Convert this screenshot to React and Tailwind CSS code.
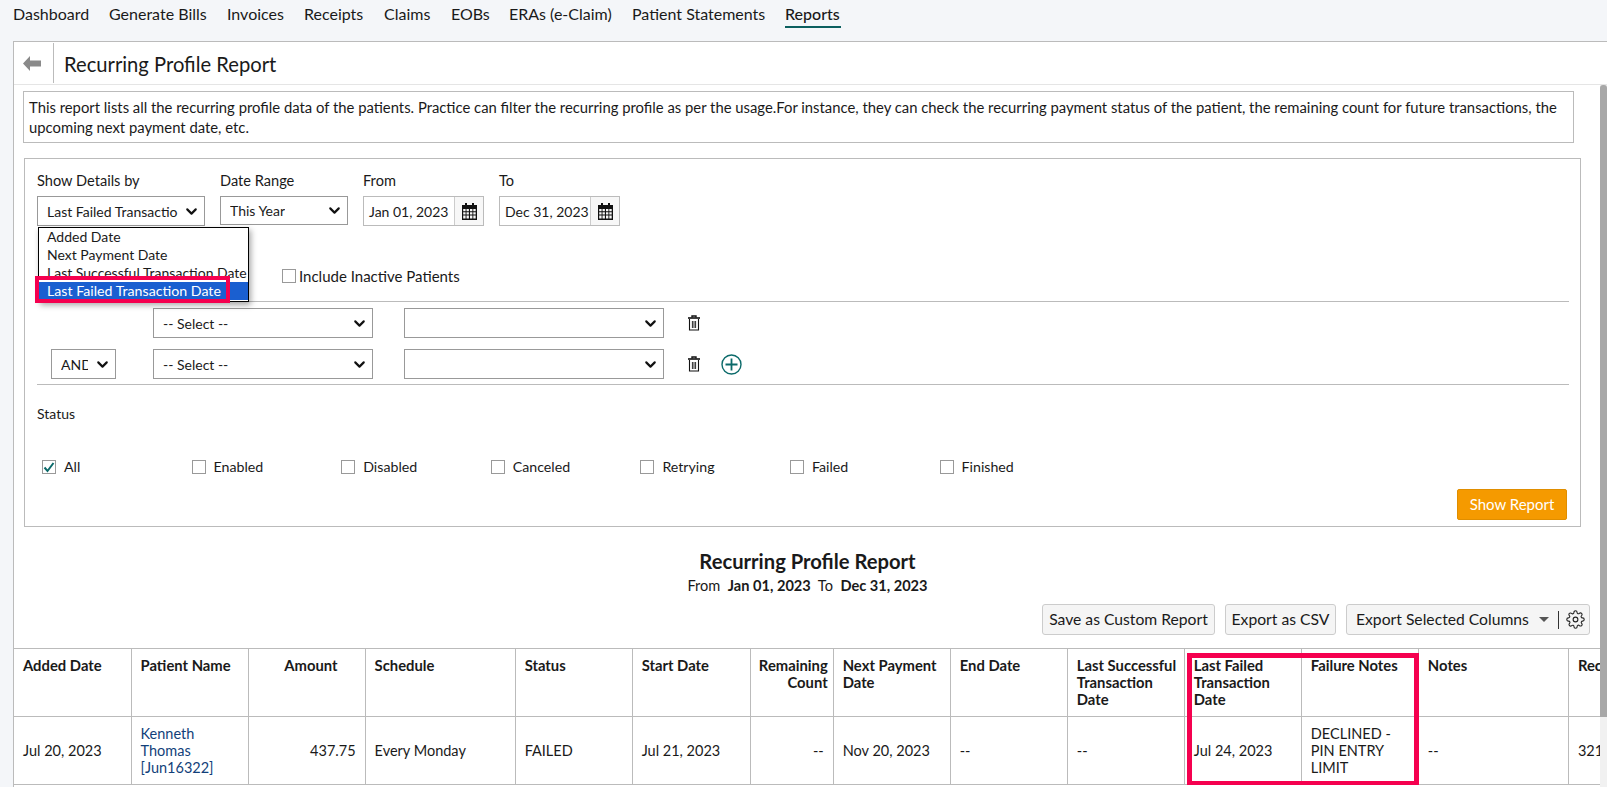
import React from 'react';
import { ChevronDown } from 'lucide-react';

const Trash = () => (
  <svg width="14" height="16" viewBox="0 0 14 16" fill="none" stroke="#111" className="shrink-0">
    <path d="M1 3h12" strokeWidth="1.6" />
    <path d="M5 2.4V1h4v1.4" strokeWidth="1.4" />
    <path d="M2.5 4v11h9V4" strokeWidth="1.1" />
    <path d="M5.4 6v7M7 6v7M8.6 6v7" strokeWidth="0.9" />
  </svg>
);

const Calendar = () => (
  <svg width="15" height="17" viewBox="0 0 15 17" fill="#111">
    <path d="M3 0h2v3H3zM10 0h2v3h-2z" />
    <path fillRule="evenodd" d="M0 2h15v15H0zM1.2 6v2.2h2.4V6zM4.5 6v2.2h2.4V6zM8 6v2.2h2.4V6zM11.3 6v2.2h2.4V6zM1.2 9.2v2.2h2.4V9.2zM4.5 9.2v2.2h2.4V9.2zM8 9.2v2.2h2.4V9.2zM11.3 9.2v2.2h2.4V9.2zM1.2 12.5v2.9h2.4v-2.9zM4.5 12.5v2.9h2.4v-2.9zM8 12.5v2.9h2.4v-2.9zM11.3 12.5v2.9h2.4v-2.9z" />
  </svg>
);

const Gear = () => (
  <svg width="19" height="19" viewBox="0 0 24 24" fill="none" stroke="#222" strokeWidth="1.4" strokeLinejoin="round">
    <circle cx="12" cy="12" r="3" />
    <path d="M19.4 15a1.65 1.65 0 0 0 .33 1.82l.06.06a2 2 0 1 1-2.83 2.83l-.06-.06a1.65 1.65 0 0 0-2.82 1.17V21a2 2 0 1 1-4 0v-.09A1.65 1.65 0 0 0 7.3 19.7l-.06.06a2 2 0 1 1-2.83-2.83l.06-.06A1.65 1.65 0 0 0 3.3 14H3a2 2 0 1 1 0-4h.09A1.65 1.65 0 0 0 4.3 7.2l-.06-.06a2 2 0 1 1 2.83-2.83l.06.06A1.65 1.65 0 0 0 10 3.2V3a2 2 0 1 1 4 0v.09a1.65 1.65 0 0 0 2.82 1.17l.06-.06a2 2 0 1 1 2.83 2.83l-.06.06A1.65 1.65 0 0 0 20.8 10H21a2 2 0 1 1 0 4h-.09a1.65 1.65 0 0 0-1.51 1z" />
  </svg>
);

const SelectBox = ({ className, value, spanClass = '' }) => (
  <div className={`flex items-center justify-between border border-[#999] bg-white pl-[9px] pr-[4px] text-[14px] text-[#1a1a1a] ${className}`}>
    <span className={`overflow-hidden whitespace-nowrap ${spanClass}`}>{value}</span>
    <ChevronDown size={17} strokeWidth={3} color="#111" className="shrink-0" />
  </div>
);

const DateBox = ({ value }) => (
  <div className="flex h-[30px] w-[121px] border border-[#bbb] bg-white text-[14px] text-[#1a1a1a]">
    <div className="flex flex-1 items-center pl-[5px] whitespace-nowrap">{value}</div>
    <div className="flex w-[29px] items-center justify-center border-l border-[#ccc] bg-[#f7f7f7]"><Calendar /></div>
  </div>
);

const Check = ({ label, checked }) => (
  <div className="flex w-[149.6px] items-center text-[14.2px] text-[#1a1a1a]">
    <span className="mr-[8px] flex h-[14px] w-[14px] items-center justify-center border border-[#999] bg-white">
      {checked && (
        <svg width="12" height="12" viewBox="0 0 12 12" fill="none" stroke="#0b6a6a" strokeWidth="2"><path d="M1.5 6.5 4.5 10l6-8" /></svg>
      )}
    </span>
    {label}
  </div>
);

const cols = [117, 117, 117, 150, 117, 118, 83, 117, 117, 117, 117, 117, 150, 117];
const heads = [
  ['Added Date'], ['Patient Name'], ['Amount', 'a'], ['Schedule'], ['Status'], ['Start Date'], ['Remaining Count', 'r'], ['Next Payment Date'], ['End Date'],
  ['Last Successful Transaction Date'], ['Last Failed Transaction Date'], ['Failure Notes'], ['Notes'], ['Recurring ID'],
];
const cells = [
  ['Jul 20, 2023'], ['Kenneth Thomas [Jun16322]', 'l'], ['437.75', 'r'], ['Every Monday'], ['FAILED'], ['Jul 21, 2023'], ['--', 'r'], ['Nov 20, 2023'], ['--'], ['--'],
  ['Jul 24, 2023'], ['DECLINED - PIN ENTRY LIMIT'], ['--'], ['321'],
];

const headAlign = (a) => (a === 'a' ? 'pl-[8px] pr-[27px] text-right' : a === 'r' ? 'pl-[5px] pr-[5px] text-right' : 'pl-[9px] pr-[5px] text-left');

export default function App() {
  return (
    <div className="h-[787px] w-[1607px] overflow-hidden bg-[#f4f6f9] font-['Lato',sans-serif] text-[14.6px] text-[#1a1a1a]">
      <nav className="flex h-[41px] items-start pl-[13px] text-[16px] text-[#1a1a1a]">
        {[['Dashboard', 'w-[96px]'], ['Generate Bills', 'w-[118px]'], ['Invoices', 'w-[77px]'], ['Receipts', 'w-[80px]'], ['Claims', 'w-[67px]'], ['EOBs', 'w-[58px]'], ['ERAs (e-Claim)', 'w-[123px]'], ['Patient Statements', 'w-[153px]']].map(([t, w]) => (
          <span key={t} className={`whitespace-nowrap pt-[5px] leading-[18px] ${w}`}>{t}</span>
        ))}
        <span className="h-[28px] w-[56px] whitespace-nowrap border-b-2 border-[#0b5f5f] pt-[5px] font-medium leading-[18px]">Reports</span>
      </nav>

      <main className="relative ml-[13px] h-[746px] border-l border-t border-[#bbb] bg-white">
        <header className="flex h-[43px] items-center border-b border-[#e5e5e5]">
          <div className="flex h-[40px] w-[40px] items-center justify-center border-r border-[#bbb] pr-[4px]">
            <svg width="18" height="15" viewBox="0 0 18 15" fill="#8a8a8a"><path d="M0 7.5 7 0v4.5h11v6H7V15z" /></svg>
          </div>
          <h1 className="pl-[10px] pt-[3px] text-[20.2px] font-normal text-[#1a1a1a]">Recurring Profile Report</h1>
        </header>

        <section className="ml-[9px] mt-[6px] h-[52px] w-[1551px] border border-[#bbb] px-[5px] pt-[5px] text-[14.83px] leading-[20px] text-[#1a1a1a]">
          This report lists all the recurring profile data of the patients. Practice can filter the recurring profile as per the usage.For instance, they can check the recurring payment status of the patient, the remaining count for future transactions, the upcoming next payment date, etc.
        </section>

        <section className="relative ml-[10px] mt-[15px] h-[369px] w-[1557px] border border-[#bbb]">
          <div className="ml-[12px] flex pt-[13px]">
            <div className="w-[183px]">
              <div className="mb-[6px] h-[18px] leading-[18px]">Show Details by</div>
              <SelectBox value="Last Failed Transactio" className="h-[30px] w-[168px]" />
            </div>
            <div className="w-[143px]">
              <div className="mb-[6px] h-[18px] leading-[18px]">Date Range</div>
              <SelectBox value="This Year" className="h-[29px] w-[128px]" />
            </div>
            <div className="w-[136px]">
              <div className="mb-[6px] h-[18px] leading-[18px]">From</div>
              <DateBox value="Jan 01, 2023" />
            </div>
            <div>
              <div className="mb-[6px] h-[18px] leading-[18px]">To</div>
              <DateBox value="Dec 31, 2023" />
            </div>
          </div>

          <div className="ml-[257px] mt-[41px] flex h-[18px] items-center text-[15px]">
            <span className="mr-[3px] h-[14px] w-[14px] border border-[#999] bg-white" />
            Include Inactive Patients
          </div>

          <div className="ml-[12px] mt-[16px] w-[1532px] border-t border-[#bbb] pt-[6px]">
            <div className="flex h-[30px] items-center">
              <SelectBox value="-- Select --" className="ml-[116px] h-[30px] w-[220px]" />
              <SelectBox value="" className="ml-[31px] h-[30px] w-[260px]" />
              <span className="ml-[23px]"><Trash /></span>
            </div>
            <div className="mt-[11px] flex h-[30px] items-center">
              <SelectBox value="AND" spanClass="w-[27px]" className="ml-[14px] h-[30px] w-[65px]" />
              <SelectBox value="-- Select --" className="ml-[37px] h-[30px] w-[220px]" />
              <SelectBox value="" className="ml-[31px] h-[30px] w-[260px]" />
              <span className="ml-[23px]"><Trash /></span>
              <svg className="ml-[20px]" width="21" height="21" viewBox="0 0 21 21" fill="none" stroke="#0b6a6a"><circle cx="10.5" cy="10.5" r="9.5" strokeWidth="1.4" /><path d="M10.5 4.5v12M4.5 10.5h12" strokeWidth="1.8" /></svg>
            </div>
          </div>

          <div className="ml-[12px] mt-[5px] w-[1532px] border-t border-[#bbb] pt-[20px] text-[14px] leading-[18px]">Status</div>
          <div className="ml-[17px] mt-[35px] flex h-[18px] items-center">
            <Check label="All" checked />
            <Check label="Enabled" />
            <Check label="Disabled" />
            <Check label="Canceled" />
            <Check label="Retrying" />
            <Check label="Failed" />
            <Check label="Finished" />
          </div>
          <div className="mr-[13px] mt-[13px] flex justify-end">
            <button className="h-[31px] w-[110px] rounded-[2px] border border-[#e08e00] bg-[#f59a00] text-[15px] text-white">Show Report</button>
          </div>

          <div className="absolute left-[13px] top-[68px] w-[211px] border border-black bg-white pb-[1px] text-[14px] leading-[18px] text-[#1a1a1a] shadow-[2px_3px_6px_rgba(0,0,0,0.35)]">
            <div className="pl-[8px]">Added Date</div>
            <div className="pl-[8px]">Next Payment Date</div>
            <div className="pl-[8px] whitespace-nowrap">Last Successful Transaction Date</div>
            <div className="bg-[#1a5fd0] pl-[8px] text-[14.2px] text-white">Last Failed Transaction Date</div>
          </div>
          <div className="absolute left-[10px] top-[117px] h-[27px] w-[195px] border-4 border-[#f5004f]" />
        </section>

        <h2 className="mt-[22px] pr-[6px] text-center text-[20.2px] font-bold leading-[24px] text-[#1a1a1a]">Recurring Profile Report</h2>
        <p className="mt-[4px] pr-[6px] text-center text-[14.6px] leading-[18px]">From&nbsp; <b>Jan 01, 2023</b>&nbsp; To&nbsp; <b>Dec 31, 2023</b></p>

        <div className="mr-[17px] mt-[9px] flex h-[31px] justify-end gap-[10px] text-[15.7px] text-[#1a1a1a]">
          <button className="w-[173px] rounded-[3px] border border-[#ccc] bg-[#f5f5f5]">Save as Custom Report</button>
          <button className="w-[111px] rounded-[3px] border border-[#ccc] bg-[#f5f5f5]">Export as CSV</button>
          <div className="flex w-[244px] items-center rounded-[3px] border border-[#ccc] bg-[#f5f5f5] pl-[9px]">
            <span className="whitespace-nowrap">Export Selected Columns</span>
            <span className="ml-[10px] h-0 w-0 border-x-[5px] border-t-[5px] border-x-transparent border-t-[#555]" />
            <span className="ml-[9px] h-[18px] w-px bg-[#333]" />
            <span className="ml-[7px]"><Gear /></span>
          </div>
        </div>

        <div className="relative mt-[13px] overflow-hidden">
          <table className="w-[1672px] table-fixed border-collapse text-[14.5px] leading-[17px] text-[#1a1a1a]">
            <colgroup>{cols.map((w, i) => <col key={i} style={{ width: w }} />)}</colgroup>
            <thead>
              <tr className="h-[68px] border-y border-[#bbb]">
                {heads.map(([t, a], i) => (
                  <th key={i} className={`border-r border-[#bbb] pb-[8px] pt-[8px] align-top text-[14.8px] font-bold ${headAlign(a)}`}>{t}</th>
                ))}
              </tr>
            </thead>
            <tbody>
              <tr className="h-[68px] border-b border-[#bbb]">
                {cells.map(([t, a], i) => (
                  <td key={i} className={`border-r border-[#bbb] pl-[9px] pr-[9px] align-middle ${a === 'r' ? 'text-right' : 'text-left'} ${a === 'l' ? 'text-[#123f7a]' : ''}`}>{t}</td>
                ))}
              </tr>
            </tbody>
          </table>
          <div className="absolute left-[1173px] top-[5px] h-[133px] w-[232px] border-[5px] border-[#f5004f]" />
        </div>

        <div className="absolute right-0 top-[43px] h-[702px] w-[7px] bg-[#f1f1f1]">
          <div className="h-[632px] rounded-t-[3px] bg-[#a8a8a8]" />
        </div>
      </main>
    </div>
  );
}
